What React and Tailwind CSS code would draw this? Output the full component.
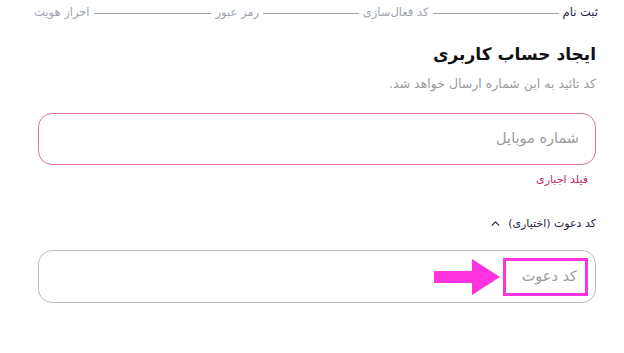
import { ChevronUp } from "lucide-react";

const steps = ["ثبت نام", "کد فعال‌سازی", "رمز عبور", "احراز هویت"];

export default function App() {
  return (
    <div
      dir="rtl"
      className="w-[624px] h-[353px] bg-white overflow-hidden pl-[38px] pr-[28px] pt-[5px]"
      style={{ fontFamily: '"DejaVu Sans", sans-serif' }}
    >
      {/* stepper */}
      <div className="flex items-center h-[16px] -ml-[4px] -mr-[2px]">
        {steps.map((s, i) => (
          <div key={s} className={`flex items-center ${i < steps.length - 1 ? "flex-1" : ""}`}>
            <span className={`text-[11.5px] whitespace-nowrap ${i === 0 ? "text-[#1f2340]" : "text-[#9ca3af]"}`}>{s}</span>
            {i < steps.length - 1 && <div className="flex-1 h-px bg-[#9ca3af] mx-[4px]" />}
          </div>
        ))}
      </div>

      <h1 className="mt-[21px] text-[17px] font-bold text-[#111] leading-[24px]">ایجاد حساب کاربری</h1>
      <p className="mt-[9px] text-[12.5px] text-[#9a9a9a] leading-[18px]">کد تائید به این شماره ارسال خواهد شد.</p>

      <div className="mt-[20px] h-[52px] rounded-[14px] border border-[#e0748f] flex items-center px-[16px]">
        <span className="text-[14.5px] text-[#9a9a9a]">شماره موبایل</span>
      </div>
      <p className="mt-[7px] mr-[8px] text-[11px] text-[#c81e5a]">فیلد اجباری</p>

      <div className="mt-[27px] flex items-center gap-[6px] text-[11px] text-[#1f2340]">
        <span>کد دعوت (اختیاری)</span>
        <ChevronUp className="w-[13px] h-[13px]" strokeWidth={2.2} />
      </div>

      <div className="mt-[18px] h-[53px] rounded-[14px] border border-[#bdbdbd] flex items-center pr-[7px]">
        <div className="relative w-[85px] h-[38px] border-[3px] border-[#ff33dd] flex items-center pr-[8px]">
          <span className="text-[14.5px] text-[#9a9a9a]">کد دعوت</span>
          <svg className="absolute right-full top-1/2 -translate-y-1/2 mr-[4px]" width="70" height="36" viewBox="0 0 70 36">
            <rect x="2" y="12" width="42" height="12" fill="#ff33dd" />
            <polygon points="40,0 68,18 40,36" fill="#ff33dd" />
          </svg>
        </div>
      </div>
    </div>
  );
}
